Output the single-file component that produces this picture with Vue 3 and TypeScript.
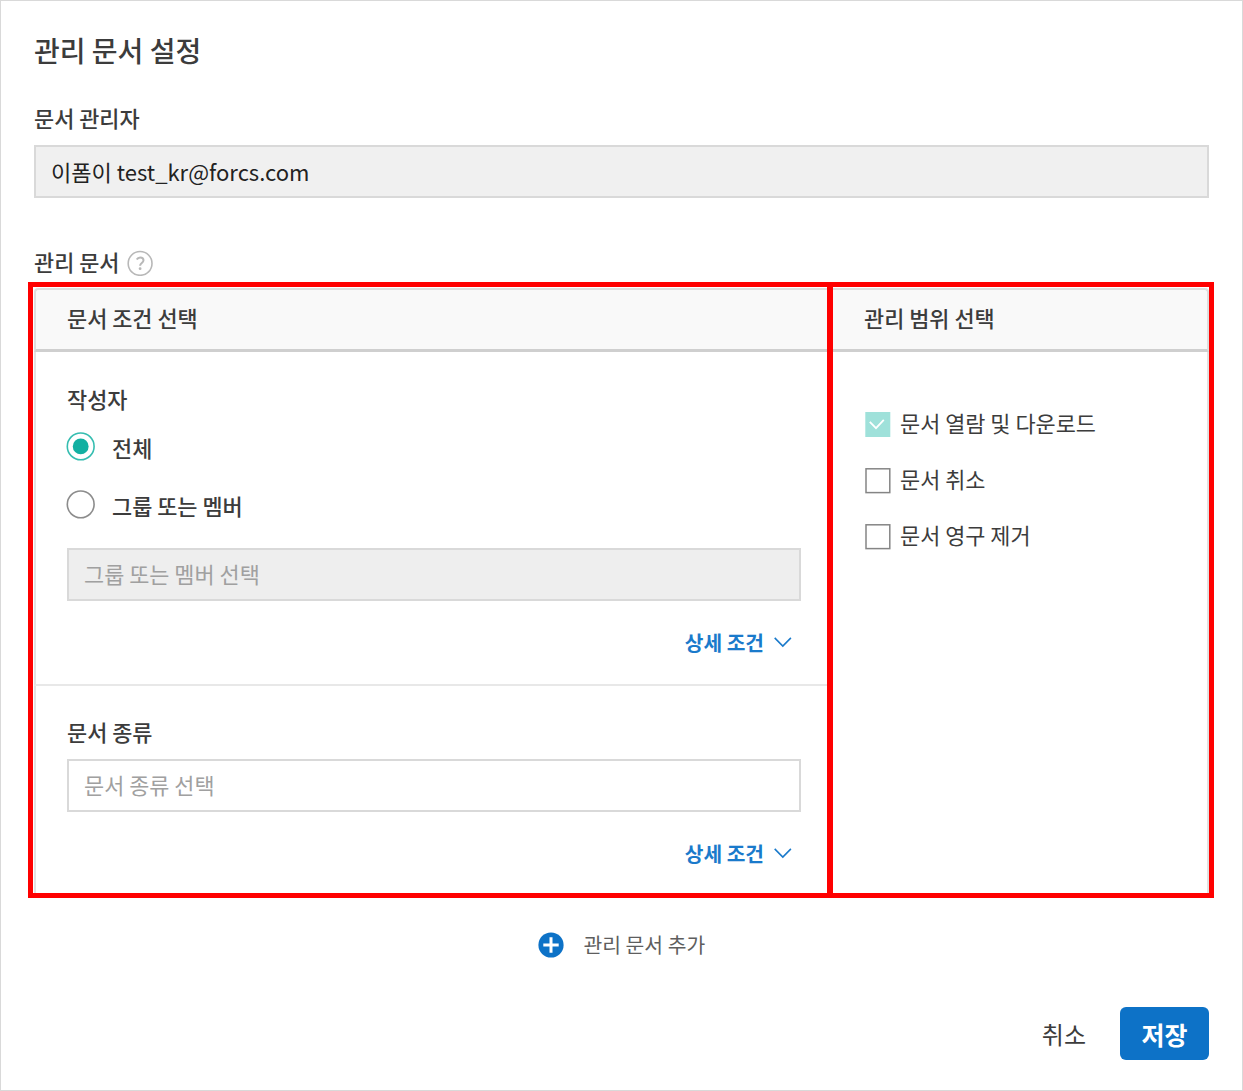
<script setup lang="ts">
import { ref } from 'vue'

interface Scope {
  label: string
  checked: boolean
}

const manager = '이폼이 test_kr@forcs.com'
const authors: string[] = ['전체', '그룹 또는 멤버']
const selectedAuthor = ref(0)
const scopes = ref<Scope[]>([
  { label: '문서 열람 및 다운로드', checked: true },
  { label: '문서 취소', checked: false },
  { label: '문서 영구 제거', checked: false },
])
</script>

<template>
  <main class="dialog">
    <h1 class="title">관리 문서 설정</h1>

    <div class="label manager-label">문서 관리자</div>
    <div class="field filled manager">{{ manager }}</div>

    <div class="label docs-label">
      <span>관리 문서</span>
      <svg class="help" width="26" height="26" viewBox="0 0 26 26" fill="none">
        <circle cx="13.1" cy="13.4" r="11.9" stroke="#b8b8b8" stroke-width="1.6" />
        <path d="M9.7 9.6C10.6 8 11.8 7.4 13.2 7.4c2 0 3.3 1.1 3.3 2.9 0 2.5-3.4 2.9-3.4 5.4" stroke="#b8b8b8" stroke-width="2" />
        <circle cx="13.1" cy="18.7" r="1.4" fill="#b8b8b8" />
      </svg>
    </div>

    <section class="frame">
      <div class="column conditions">
        <header class="head">문서 조건 선택</header>
        <div class="block author">
          <div class="label">작성자</div>
          <div
            v-for="(name, i) in authors"
            :key="name"
            class="radio"
            @click="selectedAuthor = i"
          >
            <svg width="30" height="30" viewBox="0 0 30 30" fill="none">
              <circle cx="14.7" cy="15.4" r="13.4" :stroke="selectedAuthor === i ? '#35bdb0' : '#8c8c8c'" stroke-width="1.6" />
              <circle v-if="selectedAuthor === i" cx="14.7" cy="15.4" r="7.9" fill="#12b0a2" />
            </svg>
            <span>{{ name }}</span>
          </div>
          <div class="field disabled placeholder">그룹 또는 멤버 선택</div>
          <div class="more">
            <span>상세 조건</span>
            <svg width="18" height="12" viewBox="0 0 18 12" fill="none">
              <path d="M0.7 1.9l8.1 8.1 8.1-8.1" stroke="#1a7acb" stroke-width="1.6" />
            </svg>
          </div>
        </div>
        <div class="block kind">
          <div class="label">문서 종류</div>
          <div class="field placeholder">문서 종류 선택</div>
          <div class="more">
            <span>상세 조건</span>
            <svg width="18" height="12" viewBox="0 0 18 12" fill="none">
              <path d="M0.7 1.9l8.1 8.1 8.1-8.1" stroke="#1a7acb" stroke-width="1.6" />
            </svg>
          </div>
        </div>
      </div>

      <div class="column range">
        <header class="head">관리 범위 선택</header>
        <div class="checks">
          <div v-for="scope in scopes" :key="scope.label" class="check">
            <svg width="26" height="26" viewBox="0 0 26 26" fill="none">
              <template v-if="scope.checked">
                <rect x="0.3" width="25" height="25" fill="#9fe1da" />
                <path d="M4.8 9.8l6.2 6.3 7.8-8.3" stroke="#fff" stroke-width="1.8" />
              </template>
              <rect v-else x="1" y="0.8" width="23.8" height="23.8" stroke="#858585" stroke-width="1.5" />
            </svg>
            <span>{{ scope.label }}</span>
          </div>
        </div>
      </div>
    </section>

    <div class="add">
      <svg width="26" height="26" viewBox="0 0 26 26" fill="none">
        <circle cx="13" cy="13" r="12.6" fill="#0d72c7" />
        <path d="M13 5.3v15.4M5.3 13h15.4" stroke="#fff" stroke-width="3" />
      </svg>
      <span>관리 문서 추가</span>
    </div>

    <footer class="actions">
      <button class="cancel">취소</button>
      <button class="save">저장</button>
    </footer>
  </main>
</template>

<style>
body {
  background: #fff;
}
</style>

<style scoped>
.dialog {
  box-sizing: border-box;
  width: 1243px;
  height: 1091px;
  border: 1px solid #d9d9d9;
  padding: 29px 33px 0;
  background: #fff;
  color: #3c3c3c;
  font: 500 21.9px/30px "Noto Sans CJK KR", sans-serif;
  white-space: nowrap;
  display: flex;
  flex-direction: column;
}
svg {
  display: block;
  flex: none;
}
.title {
  margin: 0;
  font-size: 28px;
  line-height: 40px;
  font-weight: 500;
}
.label {
  height: 30px;
}
.manager-label {
  margin-top: 33px;
}
.field {
  box-sizing: border-box;
  height: 53px;
  border: 2px solid #d9d9d9;
  padding: 0 15px;
  line-height: 48px;
}
.filled {
  background: #f0f0f0;
  color: #222;
  font-size: 22.05px;
  font-weight: 400;
  line-height: 48px;
}
.disabled {
  background: #eee;
}
.placeholder {
  color: #a0a0a0;
  font-weight: 400;
  line-height: 47px;
}
.manager {
  margin-top: 12px;
}
.docs-label {
  margin-top: 49px;
  display: flex;
}
.help {
  margin: 3px 0 0 8px;
}
.frame {
  box-sizing: border-box;
  width: 1186px;
  height: 616px;
  margin: 5px 0 0 -6px;
  border: 5px solid #f00;
  display: flex;
}
.column {
  box-sizing: border-box;
  padding-top: 1px;
}
.conditions {
  width: 800px;
  padding-left: 1px;
  border-right: 6px solid #f00;
  display: flex;
  flex-direction: column;
}
.range {
  flex: 1;
  display: flex;
  flex-direction: column;
}
.head {
  box-sizing: border-box;
  height: 64px;
  border: 2px solid #dedede;
  border-bottom: 3px solid #cfcfcf;
  background: #f9f9f9;
  line-height: 55px;
  padding-left: 31px;
}
.conditions .head {
  border-right: 0;
  border-top-left-radius: 4px;
}
.range .head {
  border-left: 0;
  border-top-right-radius: 4px;
}
.block {
  box-sizing: border-box;
  border-left: 2px solid #e2e2e2;
  padding: 0 26px 0 31px;
}
.author {
  height: 334px;
  border-bottom: 2px solid #e8e8e8;
  padding-top: 32px;
}
.kind {
  flex: 1;
  padding-top: 31px;
}
.radio {
  display: flex;
  height: 30px;
  gap: 16px;
  margin: 17px 0 0 -1px;
}
.radio + .radio {
  margin-top: 28px;
}
.radio span {
  margin-top: 2px;
}
.author .field {
  margin-top: 29px;
}
.kind .field {
  margin-top: 12px;
}
.more {
  display: flex;
  justify-content: flex-end;
  align-items: center;
  gap: 10px;
  height: 30px;
  margin: 26px 9px 0 0;
  color: #1a7acb;
  font-size: 20.3px;
  font-weight: 700;
}
.checks {
  flex: 1;
  display: flex;
  flex-direction: column;
  gap: 30px;
  padding: 60px 0 0 32px;
  border-right: 2px solid #e2e2e2;
}
.check {
  height: 26px;
  display: flex;
  gap: 9px;
  line-height: 21px;
  font-weight: 400;
}
.add {
  display: flex;
  align-items: center;
  gap: 19.5px;
  height: 30px;
  margin: 32px 0 0 504px;
  color: #5e5e5e;
  font-size: 20.4px;
  font-weight: 400;
}
.add span {
  margin-top: -2px;
}
.actions {
  display: flex;
  justify-content: flex-end;
  height: 53px;
  margin-top: 47px;
  gap: 34px;
}
button {
  border: 0;
  padding: 0;
  background: none;
  color: #3c3c3c;
  font: 400 24px/54px "Noto Sans CJK KR", sans-serif;
}
.save {
  width: 89px;
  border-radius: 6px;
  background: #0d72c7;
  color: #fff;
  font-size: 25px;
  font-weight: 700;
}
</style>
